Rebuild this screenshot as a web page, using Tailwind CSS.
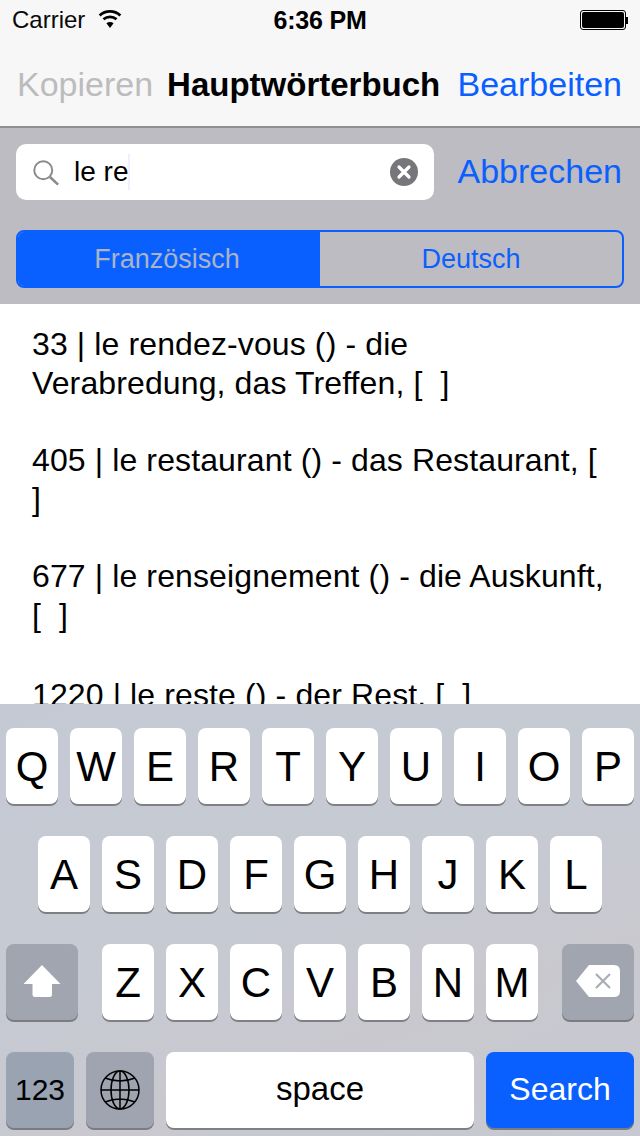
<!DOCTYPE html>
<html lang="en">
<head>
    <meta charset="UTF-8">
    <meta name="viewport" content="width=device-width, initial-scale=1.0">
    <script src="https://cdn.jsdelivr.net/npm/@tailwindcss/browser@4"></script>
    <title>Hauptwörterbuch</title>
</head>
<body class="w-[640px] h-[1136px] overflow-hidden bg-white font-['Liberation_Sans',Arial,sans-serif] text-black flex flex-col">
    <!-- status bar + nav -->
    <header class="h-[128px] shrink-0 bg-[#f7f7f8] border-b-2 border-[#8f8f92] flex flex-col">
        <div class="h-[40px] relative flex items-center px-[12px] text-[24px] leading-none">
            <span class="text-[#0a0a0a]">Carrier</span>
            <svg class="ml-[13px] mt-[-4px]" width="24" height="19" viewBox="0 0 22 18" fill="none" stroke="#000" stroke-width="2.6">
                <path d="M1.2 6.2C6.8 1 15.2 1 20.8 6.2"/>
                <path d="M4.8 9.8C8.4 6.6 13.6 6.6 17.2 9.8"/>
                <path d="M11 18L7.6 13.4C9.6 11.9 12.4 11.9 14.4 13.4Z" fill="#000" stroke="none"/>
            </svg>
            <span class="absolute left-0 w-[640px] text-center font-bold text-[25px] tracking-[-0.2px]">6:36 PM</span>
            <div class="ml-auto flex items-center">
                <div class="w-[46px] h-[20px] rounded-[3px] border border-black p-[1px]"><div class="w-full h-full bg-black rounded-[2px]"></div></div>
                <div class="w-[2px] h-[7px] bg-black"></div>
            </div>
        </div>
        <div class="flex-1 flex items-center pl-[17px] pr-[18px] pt-[2px] text-[34px] leading-none">
            <span class="text-[#bcbcbc]">Kopieren</span>
            <span class="ml-[14px] font-bold text-[33px]">Hauptwörterbuch</span>
            <span class="ml-auto text-[#0a60ff]">Bearbeiten</span>
        </div>
    </header>

    <!-- search area -->
    <section class="h-[176px] shrink-0 bg-[#bdbcc2] pt-[16px] px-[16px]">
        <div class="flex items-center justify-between h-[56px]">
            <div class="w-[418px] h-[56px] bg-white rounded-[10px] flex items-center pl-[16px] pr-[16px]">
                <svg width="27" height="27" viewBox="0 0 30 30" fill="none" stroke="#8a8a8e" stroke-width="2.2">
                    <circle cx="12.5" cy="12.5" r="10"/>
                    <path d="M20 20L29 28.5" stroke-width="2.8"/>
                </svg>
                <span class="ml-[15px] text-[28px] leading-none">le re</span>
                <span class="w-[2px] h-[36px] bg-[#eef0ff]"></span>
                <svg class="ml-auto" width="28" height="28" viewBox="0 0 28 28">
                    <circle cx="14" cy="14" r="14" fill="#77777b"/>
                    <path d="M9 9L19 19M19 9L9 19" stroke="#fff" stroke-width="3.2" stroke-linecap="round"/>
                </svg>
            </div>
            <span class="text-[#0a60ff] text-[34px] leading-none mr-[2px] mb-[2px]">Abbrechen</span>
        </div>
        <div class="mt-[30px] w-[608px] h-[58px] flex rounded-[8px] border-2 border-[#0a60ff] overflow-hidden text-[27px] leading-none">
            <div class="w-[302px] pr-[4px] pt-[1px] bg-[#0a60ff] text-[#a9b4c6] flex items-center justify-center">Französisch</div>
            <div class="flex-1 pt-[1px] text-[#0a60ff] flex items-center justify-center">Deutsch</div>
        </div>
    </section>

    <!-- results -->
    <main class="h-[400px] shrink-0 overflow-hidden bg-white pl-[32px] pt-[21px] text-[32px] leading-[39px] tracking-[0.12px]">
        <p class="h-[116px] whitespace-pre">33 | le rendez-vous () - die
Verabredung, das Treffen, [  ]</p>
        <p class="h-[116px] whitespace-pre">405 | le restaurant () - das Restaurant, [
]</p>
        <p class="h-[119px] whitespace-pre">677 | le renseignement () - die Auskunft,
[  ]</p>
        <p class="whitespace-pre">1220 | le reste () - der Rest, [  ]</p>
    </main>

    <!-- keyboard -->
    <section class="h-[432px] shrink-0 pt-[24px] flex flex-col gap-[32px] bg-[linear-gradient(160deg,#c5c9d3_0%,#c6cad3_45%,#c9c8cf_70%,#c6c9d1_100%)]">
        <div class="flex justify-center gap-[12px] text-[42px] leading-none">
            <div class="w-[52px] h-[76px] pt-[2px] bg-white rounded-[8px] shadow-[0_2px_0_#7f8084] flex items-center justify-center">Q</div>
            <div class="w-[52px] h-[76px] pt-[2px] bg-white rounded-[8px] shadow-[0_2px_0_#7f8084] flex items-center justify-center">W</div>
            <div class="w-[52px] h-[76px] pt-[2px] bg-white rounded-[8px] shadow-[0_2px_0_#7f8084] flex items-center justify-center">E</div>
            <div class="w-[52px] h-[76px] pt-[2px] bg-white rounded-[8px] shadow-[0_2px_0_#7f8084] flex items-center justify-center">R</div>
            <div class="w-[52px] h-[76px] pt-[2px] bg-white rounded-[8px] shadow-[0_2px_0_#7f8084] flex items-center justify-center">T</div>
            <div class="w-[52px] h-[76px] pt-[2px] bg-white rounded-[8px] shadow-[0_2px_0_#7f8084] flex items-center justify-center">Y</div>
            <div class="w-[52px] h-[76px] pt-[2px] bg-white rounded-[8px] shadow-[0_2px_0_#7f8084] flex items-center justify-center">U</div>
            <div class="w-[52px] h-[76px] pt-[2px] bg-white rounded-[8px] shadow-[0_2px_0_#7f8084] flex items-center justify-center">I</div>
            <div class="w-[52px] h-[76px] pt-[2px] bg-white rounded-[8px] shadow-[0_2px_0_#7f8084] flex items-center justify-center">O</div>
            <div class="w-[52px] h-[76px] pt-[2px] bg-white rounded-[8px] shadow-[0_2px_0_#7f8084] flex items-center justify-center">P</div>
        </div>
        <div class="flex justify-center gap-[12px] text-[42px] leading-none">
            <div class="w-[52px] h-[76px] pt-[2px] bg-white rounded-[8px] shadow-[0_2px_0_#7f8084] flex items-center justify-center">A</div>
            <div class="w-[52px] h-[76px] pt-[2px] bg-white rounded-[8px] shadow-[0_2px_0_#7f8084] flex items-center justify-center">S</div>
            <div class="w-[52px] h-[76px] pt-[2px] bg-white rounded-[8px] shadow-[0_2px_0_#7f8084] flex items-center justify-center">D</div>
            <div class="w-[52px] h-[76px] pt-[2px] bg-white rounded-[8px] shadow-[0_2px_0_#7f8084] flex items-center justify-center">F</div>
            <div class="w-[52px] h-[76px] pt-[2px] bg-white rounded-[8px] shadow-[0_2px_0_#7f8084] flex items-center justify-center">G</div>
            <div class="w-[52px] h-[76px] pt-[2px] bg-white rounded-[8px] shadow-[0_2px_0_#7f8084] flex items-center justify-center">H</div>
            <div class="w-[52px] h-[76px] pt-[2px] bg-white rounded-[8px] shadow-[0_2px_0_#7f8084] flex items-center justify-center">J</div>
            <div class="w-[52px] h-[76px] pt-[2px] bg-white rounded-[8px] shadow-[0_2px_0_#7f8084] flex items-center justify-center">K</div>
            <div class="w-[52px] h-[76px] pt-[2px] bg-white rounded-[8px] shadow-[0_2px_0_#7f8084] flex items-center justify-center">L</div>
        </div>
        <div class="flex px-[6px] text-[42px] leading-none">
            <div class="w-[72px] h-[76px] bg-[#a0a5af] rounded-[8px] shadow-[0_2px_0_#7a7c82] flex items-center justify-center">
                <svg class="mb-[2px]" width="38" height="32" viewBox="0 0 38 32">
                    <path d="M19 0L37.5 19H29V29.5Q29 32 26.5 32H12Q9.5 32 9.5 29.5V19H0.5Z" fill="#fff"/>
                </svg>
            </div>
            <div class="ml-[24px] flex gap-[12px]">
                <div class="w-[52px] h-[76px] pt-[2px] bg-white rounded-[8px] shadow-[0_2px_0_#7f8084] flex items-center justify-center">Z</div>
                <div class="w-[52px] h-[76px] pt-[2px] bg-white rounded-[8px] shadow-[0_2px_0_#7f8084] flex items-center justify-center">X</div>
                <div class="w-[52px] h-[76px] pt-[2px] bg-white rounded-[8px] shadow-[0_2px_0_#7f8084] flex items-center justify-center">C</div>
                <div class="w-[52px] h-[76px] pt-[2px] bg-white rounded-[8px] shadow-[0_2px_0_#7f8084] flex items-center justify-center">V</div>
                <div class="w-[52px] h-[76px] pt-[2px] bg-white rounded-[8px] shadow-[0_2px_0_#7f8084] flex items-center justify-center">B</div>
                <div class="w-[52px] h-[76px] pt-[2px] bg-white rounded-[8px] shadow-[0_2px_0_#7f8084] flex items-center justify-center">N</div>
                <div class="w-[52px] h-[76px] pt-[2px] bg-white rounded-[8px] shadow-[0_2px_0_#7f8084] flex items-center justify-center">M</div>
            </div>
            <div class="ml-auto w-[72px] h-[76px] bg-[#a0a5af] rounded-[8px] shadow-[0_2px_0_#7a7c82] flex items-center justify-center">
                <svg class="mb-[2px]" width="44" height="32" viewBox="0 0 44 32">
                    <path d="M13 0H38Q44 0 44 6V26Q44 32 38 32H13L0 16Z" fill="#fff"/>
                    <path d="M20 9L34 23M34 9L20 23" stroke="#a9adb6" stroke-width="2.2"/>
                </svg>
            </div>
        </div>
        <div class="flex px-[6px] gap-[12px] text-[30px] leading-none">
            <div class="w-[68px] h-[76px] bg-[#99a3b2] rounded-[8px] shadow-[0_2px_0_#7a7c82] flex items-center justify-center">123</div>
            <div class="w-[68px] h-[76px] bg-[#a0a3b0] rounded-[8px] shadow-[0_2px_0_#7a7c82] flex items-center justify-center">
                <svg width="40" height="40" viewBox="0 0 40 40" fill="none" stroke="#000" stroke-width="1.5">
                    <circle cx="20" cy="20" r="19"/>
                    <ellipse cx="20" cy="20" rx="9" ry="19"/>
                    <path d="M20 1V39M1 20H39M5 8Q20 14 35 8M5 32Q20 26 35 32"/>
                </svg>
            </div>
            <div class="w-[308px] h-[76px] pb-[3px] bg-white text-[33px] rounded-[8px] shadow-[0_2px_0_#7f8084] flex items-center justify-center">space</div>
            <div class="w-[148px] h-[76px] pb-[3px] bg-[#0a60ff] text-white text-[32px] rounded-[8px] shadow-[0_2px_0_#7a7c82] flex items-center justify-center">Search</div>
        </div>
    </section>
</body>
</html>
